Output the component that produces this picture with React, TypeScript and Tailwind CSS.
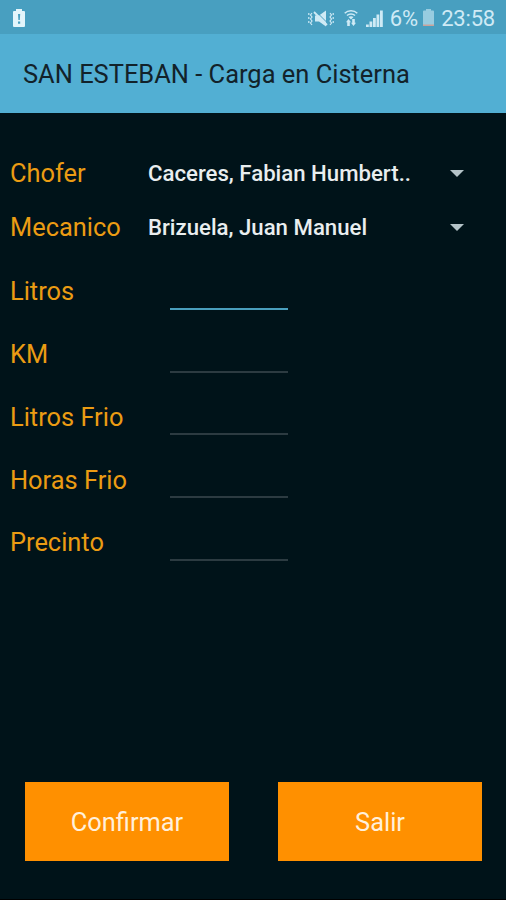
import React, { useState } from 'react';

const crew = [
  { id: 'chofer', label: 'Chofer', value: 'Caceres, Fabian Humbert..' },
  { id: 'mecanico', label: 'Mecanico', value: 'Brizuela, Juan Manuel' },
];

const fields = [
  { id: 'litros', label: 'Litros' },
  { id: 'km', label: 'KM' },
  { id: 'litrosFrio', label: 'Litros Frio' },
  { id: 'horasFrio', label: 'Horas Frio' },
  { id: 'precinto', label: 'Precinto' },
];

const StatusBar = () => (
  <div className="flex h-[34px] items-center bg-[#489fc0] pt-[3px] pl-3 pr-[11px] text-[#cfeaf5]">
    {/* Low battery notification */}
    <svg className="h-[19px] w-[14px]" viewBox="0 0 14 19">
      <path fill="#e3f5fb" d="M4 0h6v2h2a1 1 0 0 1 1 1v14a1 1 0 0 1-1 1H2a1 1 0 0 1-1-1V3a1 1 0 0 1 1-1h2z" />
      <path fill="#489fc0" d="M6 5h2.2l-.4 6H6.400zM6 12.500h2.200v2.200H6z" />
    </svg>

    <div className="ml-auto flex items-center">
      {/* Vibrate / muted */}
      <svg className="h-[17px] w-[26px]" viewBox="0 0 26 17" fill="none" stroke="currentColor">
        <path fill="currentColor" stroke="none" d="M7 5.500h4l7-5v16l-7-5H7z" />
        <path stroke="#489fc0" strokeWidth="1" d="M8 1.500l11 11" />
        <path strokeWidth="1.800" d="M6 2l13 13" />
        <path strokeWidth="1.200" d="M4 3L2.500 5 4 7 2.500 9 4 11l-1.500 2L4 15M.8 3v2M.8 7v2M.8 11v2M22 3l1.500 2L22 7l1.500 2-1.500 2 1.500 2-1.500 2M25.200 3v2M25.200 7v2M25.200 11v2" />
      </svg>
      {/* Wifi with traffic arrows */}
      <svg className="ml-[10px] h-[17px] w-[14px]" viewBox="0 0 14 17" fill="none" stroke="currentColor">
        <path strokeWidth="1.500" d="M.7 3.200C4 0 10 0 13.300 3.200M3 5.500c2.200-2 5.800-2 8 0" />
        <path fill="currentColor" stroke="none" d="M4.500 7c1.300-1 3.700-1 5 0L7 9.500zM4.500 9l2.500 3.300H5.800V16H3.200v-3.700H2zM9.500 16L7 12.700h1.200V9h2.600v3.700H12z" />
      </svg>
      {/* Signal */}
      <svg className="ml-[8px] h-[17px] w-[17px]" viewBox="0 0 17 17" fill="currentColor">
        <path d="M0 14.500h2.800V17H0zM3.500 11.500h2.800V17H3.500zM7 8h2.800v9H7zM10.500 4.500h2.800V17h-2.800zM14 .5h2.800V17H14z" />
      </svg>
      <span className="ml-[7px] text-[22px] leading-none">6%</span>
      {/* Battery level */}
      <svg className="ml-[5px] -mt-[2px] h-[17px] w-[11px]" viewBox="0 0 11 17">
        <path fill="#98cce0" d="M3 0h5v1.500h2a1 1 0 0 1 1 1V17H0V2.500a1 1 0 0 1 1-1h2z" />
        <path fill="#c9a29b" d="M0 15.500h11V17H0z" />
      </svg>
      <span className="ml-[7px] text-[22px] leading-none tracking-[-0.2px]">23:58</span>
    </div>
  </div>
);

const App = () => {
  const [values, setValues] = useState<Record<string, string>>({});
  const [active, setActive] = useState('litros');

  return (
    <div className="flex h-[900px] w-[506px] flex-col overflow-hidden border-b border-black bg-[#001319] font-['Roboto',sans-serif]">
      <StatusBar />

      <header className="flex h-[79px] items-center bg-[#52afd3] pt-[2px] pl-[23px]">
        <h1 className="text-[25.45px] text-[#12222a]">SAN ESTEBAN - Carga en Cisterna</h1>
      </header>

      <main className="flex-1 pt-[33px]">
        {/* Crew selectors */}
        {crew.map((item) => (
          <div key={item.id} className="flex h-[54px] items-center pl-[10px] pr-[42px]">
            <span className="w-[138px] text-[25.4px] text-[#eb9c13]">{item.label}</span>
            <button className="flex flex-1 items-center justify-between text-[22.2px] font-medium text-[#e9eeef]">
              <span className="pt-[2px]">{item.value}</span>
              <svg className="mt-[2px] h-[7px] w-[14px]" viewBox="0 0 14 7" fill="#b4c3c8">
                <path d="M0 0h14L7 7z" />
              </svg>
            </button>
          </div>
        ))}

        {/* Load values */}
        <div className="pt-[5.4px]">
          {fields.map((field) => (
            <div key={field.id} className="flex h-[62.8px] items-center pl-[10px]">
              <label htmlFor={field.id} className="w-[160px] pt-px text-[25.4px] text-[#eb9c13]">
                {field.label}
              </label>
              <input
                id={field.id}
                value={values[field.id] || ''}
                onFocus={() => setActive(field.id)}
                onChange={(e) => setValues({ ...values, [field.id]: e.target.value })}
                className={`mt-[2px] h-[36px] w-[118px] border-b-2 text-[23px] text-white outline-none ${
                  active === field.id ? 'border-[#4a9fbd]' : 'border-[#2c3b41]'
                }`}
              />
            </div>
          ))}
        </div>
      </main>

      <footer className="flex gap-[49px] px-[25px] pb-[38px]">
        <button className="h-[79px] w-[204px] shrink-0 bg-[#ff9000] pt-[2px] text-[25.4px] text-[#fff0dc]">Confirmar</button>
        <button className="h-[79px] w-[204px] shrink-0 bg-[#ff9000] pt-[2px] text-[25.4px] text-[#fff0dc]">Salir</button>
      </footer>
    </div>
  );
};

export default App;
